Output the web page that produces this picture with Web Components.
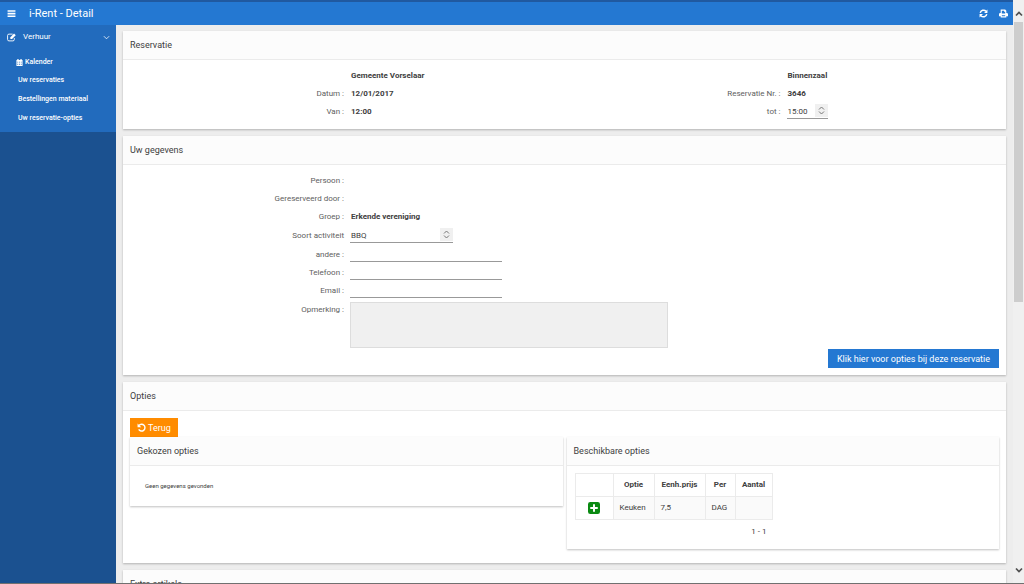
<!DOCTYPE html>
<html lang="nl">
<head>
<meta charset="utf-8">
<title>i-Rent - Detail</title>
<style>
html,body{height:100%;margin:0}
body{font-family:Roboto,"Open Sans",sans-serif;font-size:8px;line-height:18px;color:#404040;background:#ededed;overflow:hidden}
</style>
</head>
<body>
<rent-app></rent-app>
<script>
const icons = {
  menu: ['0 0 16 16','<path d="M1 2h14v3H1zM1 6.700h14v3H1zM1 11.400h14v3H1z"/>'],
  edit: ['0 0 16 16','<path d="M10 2H3.500A2.500 2.500 0 0 0 1 4.500v7A2.500 2.500 0 0 0 3.500 14h7a2.500 2.500 0 0 0 2.500-2.500V9" fill="none" stroke="currentColor" stroke-width="1.600"/><path d="M6 7.500 12.500 1 15.500 4 9 10.500H6z"/>'],
  chevron: ['0 0 16 16','<path d="M2 5l6 6 6-6" fill="none" stroke="currentColor" stroke-width="1.800"/>'],
  up: ['0 0 16 16','<path d="M2 11l6-6 6 6" fill="none" stroke="currentColor" stroke-width="3.500"/>'],
  down: ['0 0 16 16','<path d="M2 5l6 6 6-6" fill="none" stroke="currentColor" stroke-width="3.500"/>'],
  calendar: ['0 0 16 16','<path fill-rule="evenodd" d="M1 2h2V0h3v2h4V0h3v2h2v14H1zM3 6v2h2V6zm4 0v2h2V6zm4 0v2h2V6zM3 11v2h2v-2zm4 0v2h2v-2zm4 0v2h2v-2z"/>'],
  refresh: ['0 0 16 16','<path d="M2.200 7A6 6 0 0 1 12.500 4M13.800 9A6 6 0 0 1 3.500 12" fill="none" stroke="currentColor" stroke-width="2.600"/><path d="M15 1v6H9zM1 15V9h6z"/>'],
  print: ['0 0 16 16','<path fill-rule="evenodd" d="M3 1h8l2 2v4h1.500L16 8.500V13h-3v2H3v-2H0V8.500L1.500 7H3zM5 3v5h6V5H9V3zM5 11v2h6v-2z"/>'],
  undo: ['0 0 16 16','<path d="M3.500 4.500A6 6 0 1 1 3 11.500" fill="none" stroke="currentColor" stroke-width="2.500"/><path d="M1 1v6.500h6.500z"/>'],
  plus: ['0 0 16 16','<path fill-rule="evenodd" d="M3 0h10a3 3 0 0 1 3 3v10a3 3 0 0 1-3 3H3a3 3 0 0 1-3-3V3a3 3 0 0 1 3-3zm3.700 3v3.700H3v2.600h3.700V13h2.600V9.300H13V6.700H9.300V3z"/>']
};
function define(name, html, setup){
  const t = document.createElement('template');
  t.innerHTML = html;
  customElements.define(name, class extends HTMLElement{
    constructor(){
      super();
      this.attachShadow({mode:'open'}).append(t.content.cloneNode(true));
    }
    connectedCallback(){ if(setup) setup(this, this.shadowRoot); }
  });
}

define('rent-icon', `<style>
:host{display:inline-block;width:var(--size,9px);height:var(--size,9px);flex:none}
svg{display:block;width:100%;height:100%;fill:currentColor}
</style><svg aria-hidden="true"></svg>`, (el, root) => {
  const svg = root.querySelector('svg'), [box, body] = icons[el.getAttribute('name')];
  svg.setAttribute('viewBox', box);
  svg.innerHTML = body;
});

define('rent-header', `<style>
:host{display:flex;align-items:center;height:23px;padding:0 5px 0 7px;background:#2478d2;color:#fff;border-top:2px solid #2059a0;box-sizing:content-box}
h1{flex:1;margin:0 0 0 13px;font-size:11px;font-weight:400}
button{display:flex;padding:0;border:0;background:none;color:inherit}
.tools{display:flex;gap:11px}
</style>
<button aria-label="Menu"><rent-icon name="menu"></rent-icon></button>
<h1><slot></slot></h1>
<div class="tools"><button aria-label="Vernieuwen"><rent-icon name="refresh"></rent-icon></button><button aria-label="Afdrukken"><rent-icon name="print"></rent-icon></button></div>`);

define('rent-sidebar', `<style>
:host{display:block;background:#1b5190;color:#fff}
nav{background:#226bbd;padding-bottom:4px}
a{color:inherit;text-decoration:none}
.group{display:flex;align-items:center;height:24px;padding:0 6px 0 7px}
.group span{flex:1;margin-left:7px}
.group rent-icon:last-child{--size:7px}
ul{list-style:none;margin:0;padding:4px 0 0 18px;font-size:7px;font-weight:500}
li{height:19px;line-height:19px}
li:first-child{height:18px;margin-left:-2px}
li a{display:flex;align-items:center;gap:2px}
li rent-icon{--size:7px}
</style>
<nav><a class="group" href="#"><rent-icon name="edit"></rent-icon><span>Verhuur</span><rent-icon name="chevron"></rent-icon></a>
<ul><li><a href="#"><rent-icon name="calendar"></rent-icon>Kalender</a></li><li><a href="#">Uw reservaties</a></li><li><a href="#">Bestellingen materiaal</a></li><li><a href="#">Uw reservatie-opties</a></li></ul></nav>`);

define('rent-card', `<style>
:host{display:block;min-width:0;background:#fff;box-shadow:0 1px 2px #00000040}
h2{margin:0;padding:0 7px;height:28px;line-height:28px;border-bottom:1px solid #ebebeb;background:#fcfcfc;font-size:9px;font-weight:400}
.body{padding:7px}
</style><h2></h2><div class="body"><slot></slot></div>`, (el, root) => {
  root.querySelector('h2').textContent = el.getAttribute('heading');
});

define('rent-field', `<style>
:host{display:grid;grid-template-columns:216px 1fr;min-height:18px;line-height:18px}
label,.label{padding-right:2px;text-align:right;white-space:pre;color:#606060}
.value{min-width:0;padding-left:4px;display:flex;align-items:flex-start}
b{padding-left:1px;font-weight:700}
input,textarea{box-sizing:border-box;margin:0;border:0;outline:0;font:inherit;color:inherit}
input{width:152px;height:16px;border-bottom:1px solid #999;background:none;padding:0 1px}
textarea{width:318px;height:46px;border:1px solid #ddd;background:#f0f0f0;resize:none}
.select{position:relative;display:flex;width:var(--w);height:14px;margin-top:1px;border-bottom:1px solid #999}
select{appearance:none;width:100%;border:0;padding:0 1px;background:none;font:inherit;line-height:13px;color:inherit}
.arrows{position:absolute;right:0;top:0;width:13px;height:13px;background:#f0f0f0;display:grid;place-content:center;pointer-events:none;color:#777}
.arrows svg{display:block;width:7px;height:9px;fill:none;stroke:currentColor}
:host([type=select]){min-height:var(--h,18px)}
:host([type=area]) .value{padding-top:1px}
</style><label for="control"></label><div class="value"></div>`, (el, root) => {
  const type = el.getAttribute('type'), value = el.getAttribute('value') || '';
  let label = root.querySelector('label');
  if(!type){
    const s = document.createElement('span');
    s.className = 'label';
    label.replaceWith(s);
    label = s;
  }
  label.textContent = el.getAttribute('label') || '';
  root.querySelector('.value').innerHTML =
    type === 'select' ? `<div class="select"><select id="control"><option>${value}</option></select><span class="arrows"><svg viewBox="0 0 7 9"><path d="M1 3.500 3.500 1 6 3.500M1 5.500 3.500 8 6 5.500"/></svg></span></div>` :
    type === 'area' ? '<textarea id="control"></textarea>' :
    type === 'text' ? '<input id="control" type="text">' :
    value ? `<b>${value}</b>` : '';
});

define('rent-button', `<style>
:host{display:inline-flex}
button{display:flex;align-items:center;gap:2px;height:19px;padding:0 var(--pad,7px);border:0;background:var(--bg,#2478d2);color:#fff;font:inherit;font-size:9px}
</style><button><slot></slot></button>`);

define('rent-options', `<style>
:host{display:block;width:198px;margin:0 1px}
table{width:100%;table-layout:fixed;border-collapse:collapse;line-height:12px}
th,td{height:22px;padding:0 6px;border:1px solid #ebebeb;text-align:left;white-space:nowrap}
th{text-align:center;font-weight:700;padding:0}
td{background:#fafafa}
td:first-child{background:#fff;text-align:center}
button{border:0;padding:0;background:none;color:#0a8a12;vertical-align:middle;display:inline-flex;--size:12px}
p{margin:0;padding:3px 6px 1px;text-align:right}
</style>
<table><colgroup><col style="width:38px"><col style="width:41px"><col style="width:51px"><col style="width:30px"><col></colgroup>
<thead><tr><th></th><th>Optie</th><th>Eenh.prijs</th><th>Per</th><th>Aantal</th></tr></thead>
<tbody><tr><td><button aria-label="Toevoegen"><rent-icon name="plus"></rent-icon></button></td><td>Keuken</td><td>7,5</td><td>DAG</td><td></td></tr></tbody></table>
<p>1 - 1</p>`);

define('rent-scrollbar', `<style>
:host{display:flex;flex-direction:column;align-items:center;justify-content:space-between;background:#f0f0f0;color:#505050;--size:8px}
i{width:9px;height:48vh;background:#cdcdcd}
.up{margin:10px 0 4px}
.down{margin:auto 0 9px}
</style><rent-icon class="up" name="up"></rent-icon><i></i><rent-icon class="down" name="down"></rent-icon>`);

define('rent-app', `<style>
:host{display:grid;grid-template:auto minmax(0,1fr) / 116px minmax(0,1fr) 11px;height:100vh;box-sizing:border-box;border-bottom:1px solid #707070}
rent-header{grid-column:1/3}
rent-scrollbar{grid-column:3;grid-row:1/3}
main{display:flex;flex-direction:column;gap:7px;padding:6px 7px;overflow:hidden}
main>rent-card{flex:none}
.pair{display:grid;grid-template-columns:1fr 1fr;column-gap:4px}
.summary{padding-bottom:1px}
.time{--w:41px}
.kind{--w:103px;--h:19px;margin-top:1px}
.action{display:flex;justify-content:flex-end;margin-top:1px;--pad:9px}
.note{margin-top:1px}
.boxes{align-items:start;padding-bottom:7px}
.empty{margin:0;padding:4px 8px;font-size:6px}
.back{--bg:#ff8c00;--size:9px;display:flex}
</style>
<rent-header>i-Rent - Detail</rent-header>
<rent-sidebar></rent-sidebar>
<main>
<rent-card heading="Reservatie"><div class="pair summary">
<div><rent-field value="Gemeente Vorselaar"></rent-field><rent-field label="Datum :" value="12/01/2017"></rent-field><rent-field label="Van :" value="12:00"></rent-field></div>
<div><rent-field value="Binnenzaal"></rent-field><rent-field label="Reservatie Nr. :" value="3646"></rent-field><rent-field class="time" type="select" label="tot :" value="15:00"></rent-field></div>
</div></rent-card>
<rent-card heading="Uw gegevens">
<rent-field label="Persoon :"></rent-field><rent-field label="Gereserveerd door :"></rent-field><rent-field label="Groep :" value="Erkende vereniging"></rent-field>
<rent-field class="kind" type="select" label="Soort activiteit" value="BBQ"></rent-field>
<rent-field type="text" label="andere :"></rent-field><rent-field type="text" label="Telefoon :"></rent-field><rent-field type="text" label="Email :"></rent-field>
<rent-field class="note" type="area" label="Opmerking :"></rent-field>
<div class="action"><rent-button>Klik hier voor opties bij deze reservatie</rent-button></div>
</rent-card>
<rent-card heading="Opties">
<rent-button class="back"><rent-icon name="undo"></rent-icon>Terug</rent-button>
<div class="pair boxes">
<rent-card heading="Gekozen opties"><p class="empty">Geen gegevens gevonden</p></rent-card>
<rent-card heading="Beschikbare opties"><rent-options></rent-options></rent-card>
</div></rent-card>
<rent-card heading="Extra artikels"></rent-card>
</main>
<rent-scrollbar></rent-scrollbar>`);
</script>
</body>
</html>
